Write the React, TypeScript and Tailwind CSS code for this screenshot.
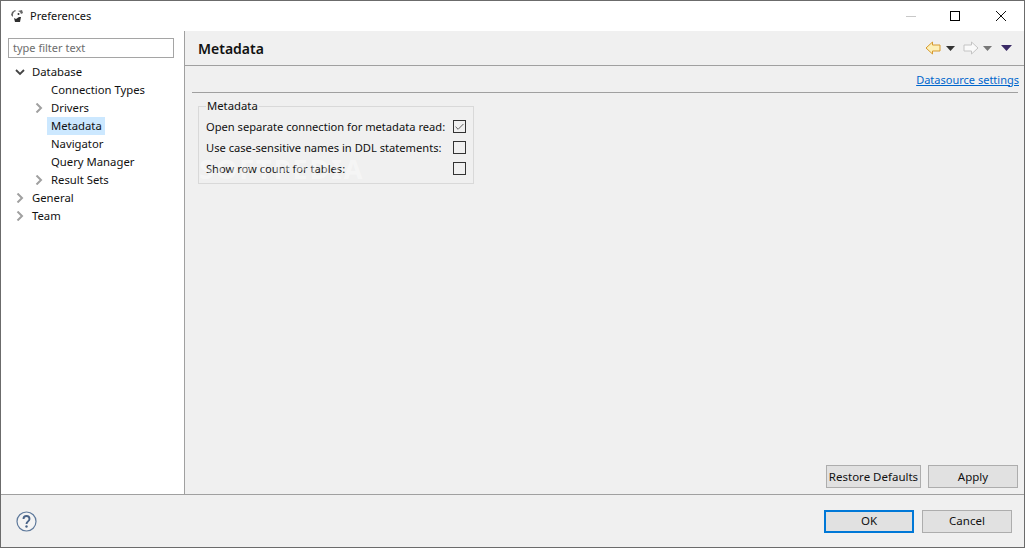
import { Check } from "lucide-react";

function Chevron({ open }: { open?: boolean }) {
  return (
    <svg width="10" height="10" viewBox="0 0 10 10" className="shrink-0" fill="none">
      {open ? (
        <path d="M1 3l4 4 4-4" stroke="#444" strokeWidth="1.8" />
      ) : (
        <path d="M2.500 0.500l4.500 4.500-4.500 4.500" stroke="#a0a0a0" strokeWidth="2" />
      )}
    </svg>
  );
}

function TreeRow({
  label,
  level,
  arrow,
  open,
  selected,
}: {
  label: string;
  level: 0 | 1;
  arrow?: boolean;
  open?: boolean;
  selected?: boolean;
}) {
  return (
    <div className={level === 0 ? "flex h-[18px] items-center pl-[14px]" : "flex h-[18px] items-center pl-[33px]"}>
      <div className="w-[17px]">{arrow && <Chevron open={open} />}</div>
      <span className={selected ? "-ml-[4px] whitespace-nowrap bg-[#cce8ff] pl-[4px] pr-[3px] leading-[18px]" : "whitespace-nowrap leading-[18px]"}>
        {label}
      </span>
    </div>
  );
}

function OptionRow({ label, checked }: { label: string; checked?: boolean }) {
  return (
    <div className="flex h-[21px] items-center justify-between pr-[7px]">
      <span className="whitespace-nowrap pt-[1px] text-[11.15px]">{label}</span>
      <div className="flex h-[13px] w-[13px] items-center justify-center border border-[#333] bg-[#f0f0f0]">
        {checked && <Check size={12} strokeWidth={1.7} color="#333" />}
      </div>
    </div>
  );
}

function Btn({ label, primary, width }: { label: string; primary?: boolean; width: string }) {
  return (
    <button
      className={
        primary
          ? `h-[23px] ${width} whitespace-nowrap border-2 border-[#0078d7] bg-[#e1e1e1] text-[11.5px] text-[#111]`
          : `h-[23px] ${width} whitespace-nowrap border border-[#adadad] bg-[#e1e1e1] text-[11.5px] text-[#111]`
      }
    >
      {label}
    </button>
  );
}

function Arrow({ left, enabled }: { left?: boolean; enabled?: boolean }) {
  return (
    <svg width="16" height="14" viewBox="0 0 16 14">
      <path
        d={left ? "M1 7L7.500 1v3H15v6H7.500v3z" : "M15 7L8.500 1v3H1v6h7.500v3z"}
        fill={enabled ? "#fdf0b8" : "#fafafa"}
        stroke={enabled ? "#d79a2e" : "#c4c4c4"}
        strokeWidth="1"
      />
    </svg>
  );
}

function Caret({ color, big }: { color: string; big?: boolean }) {
  return (
    <svg width={big ? 11 : 9} height={big ? 6 : 5} viewBox="0 0 9 5" preserveAspectRatio="none">
      <path d="M0 0h9L4.500 5z" fill={color} />
    </svg>
  );
}

export default function App() {
  return (
    <div className="relative flex h-[548px] w-[1025px] flex-col overflow-hidden border border-[#6b6b6b] bg-[#f0f0f0] font-['Noto_Sans',sans-serif] text-[11.3px] text-[#111]">
      {/* Title bar */}
      <div className="flex h-[30px] items-center bg-white">
        <svg width="16" height="16" viewBox="0 0 16 16" className="ml-[8px]">
          <path d="M2 7l1-3 3-2 1 1-2 1-1 2v3zM9 3l4-1 1 3-2 1-1-2z" fill="#666" />
          <path d="M5 10l2 1 3-2 2 0-1 5H6z" fill="#2f2f2f" />
          <circle cx="9.500" cy="6" r="1" fill="#333" />
        </svg>
        <span className="ml-[5px] text-[11px]">Preferences</span>
        <div className="ml-auto flex items-center">
          <div className="mr-[34px] h-px w-[10px] bg-[#c8c8c8]" />
          <div className="mr-[35px] h-[10px] w-[10px] border border-black" />
          <svg width="12" height="12" viewBox="0 0 12 12" className="mr-[17px]">
            <path d="M1 1l10 10M11 1L1 11" stroke="#111" strokeWidth="1" />
          </svg>
        </div>
      </div>

      {/* Main area */}
      <div className="flex min-h-0 flex-1">
        <div className="w-[184px] shrink-0 border-r border-[#a0a0a0] bg-white pl-[7px] pt-[7px]">
          <div className="h-[20px] w-[166px] border border-[#a5a5a5] px-[4px] text-[11px] leading-[18px] text-[#6d6d6d]">
            type filter text
          </div>
          <div className="-ml-[7px] mt-[5px]">
            <TreeRow label="Database" level={0} arrow open />
            <TreeRow label="Connection Types" level={1} />
            <TreeRow label="Drivers" level={1} arrow />
            <TreeRow label="Metadata" level={1} selected />
            <TreeRow label="Navigator" level={1} />
            <TreeRow label="Query Manager" level={1} />
            <TreeRow label="Result Sets" level={1} arrow />
            <TreeRow label="General" level={0} arrow />
            <TreeRow label="Team" level={0} arrow />
          </div>
        </div>

        <div className="flex min-w-0 flex-1 flex-col">
          <div className="flex h-[35px] shrink-0 items-center border-b border-[#a0a0a0] pl-[13px] pr-[12px]">
            <span className="text-[14px] font-semibold">Metadata</span>
            <div className="ml-auto flex items-center">
              <Arrow left enabled />
              <div className="ml-[5px]"><Caret color="#333" /></div>
              <div className="ml-[8px]"><Arrow /></div>
              <div className="ml-[4px]"><Caret color="#777" /></div>
              <div className="ml-[9px]"><Caret color="#3a2a66" big /></div>
            </div>
          </div>

          <div className="flex min-h-0 flex-1 flex-col pl-[7px] pr-[6px]">
            <div className="flex h-[27px] shrink-0 items-center justify-end border-b border-[#a0a0a0] pt-[2px]">
              <a className="-mr-[1px] text-[11px] text-[#0066cc] underline">Datasource settings</a>
            </div>
            <fieldset className="ml-[6px] mt-[7px] h-[84px] w-[276px] border border-[#d9d9d9] pl-[7px]">
              <legend className="px-[1px] leading-[12px]">Metadata</legend>
              <div className="mt-[4px]">
                <OptionRow label="Open separate connection for metadata read:" checked />
                <OptionRow label="Use case-sensitive names in DDL statements:" />
                <OptionRow label="Show row count for tables:" />
              </div>
            </fieldset>
            <div className="mt-auto flex justify-end gap-[7px] pb-[6px]">
              <Btn label="Restore Defaults" width="w-[95px]" />
              <Btn label="Apply" width="w-[90px]" />
            </div>
          </div>
        </div>
      </div>

      {/* Footer */}
      <div className="flex h-[53px] shrink-0 items-center border-t border-[#a0a0a0] pl-[15px] pr-[11px]">
        <svg width="21" height="21" viewBox="0 0 21 21">
          <circle cx="10.500" cy="10.500" r="9.500" fill="#f4f4f4" stroke="#5f7a9c" strokeWidth="1.2" />
          <path d="M7.500 8c0-4 6-4 6 0 0 2.400-3 2.400-3 5" fill="none" stroke="#4a6488" strokeWidth="1.900" />
          <circle cx="10.500" cy="15.500" r="1.200" fill="#4a6488" />
        </svg>
        <div className="ml-auto flex gap-[8px] pr-[1px]">
          <Btn label="OK" primary width="w-[90px]" />
          <Btn label="Cancel" width="w-[90px]" />
        </div>
      </div>

      {/* Watermark */}
      <div className="pointer-events-none absolute left-[198px] top-[148px] text-[27px] font-bold tracking-[2px] text-white/40">
        SOFTPEDIA
      </div>
    </div>
  );
}
